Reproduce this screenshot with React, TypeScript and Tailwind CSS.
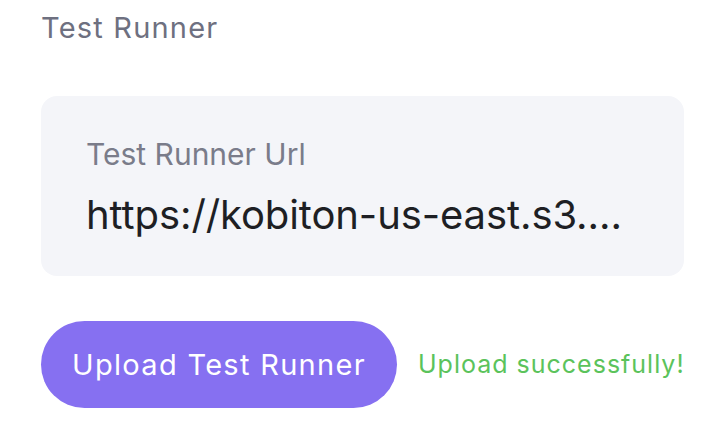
export default function App() {
  return (
    <div className="min-h-screen bg-white pl-[41px] pr-[40px] pt-[10px] font-['Inter',sans-serif]">
      <h2 className="text-[29px] leading-[36px] font-normal tracking-[1.2px] text-[#6e7080]">Test Runner</h2>

      <div className="mt-[50px] h-[180px] rounded-2xl bg-[#f4f5f9] px-[45px] pt-[40px]">
        <div className="text-[30px] leading-[36px] text-[#7a7c8a]">Test Runner Url</div>
        <div className="mt-[19px] truncate text-[40px] leading-[48px] tracking-[-0.1px] text-[#1e1f24]">
          https://kobiton-us-east.s3....
        </div>
      </div>

      <div className="mt-[45px] flex items-center gap-[21px]">
        <button className="flex h-[87px] w-[356px] shrink-0 items-center justify-center rounded-full bg-[#8670f1] text-[29px] tracking-[1.3px] text-white">
          Upload Test Runner
        </button>
        <span className="whitespace-nowrap text-[25px] tracking-[1px] text-[#5bc35b]">Upload successfully!</span>
      </div>
    </div>
  );
}
